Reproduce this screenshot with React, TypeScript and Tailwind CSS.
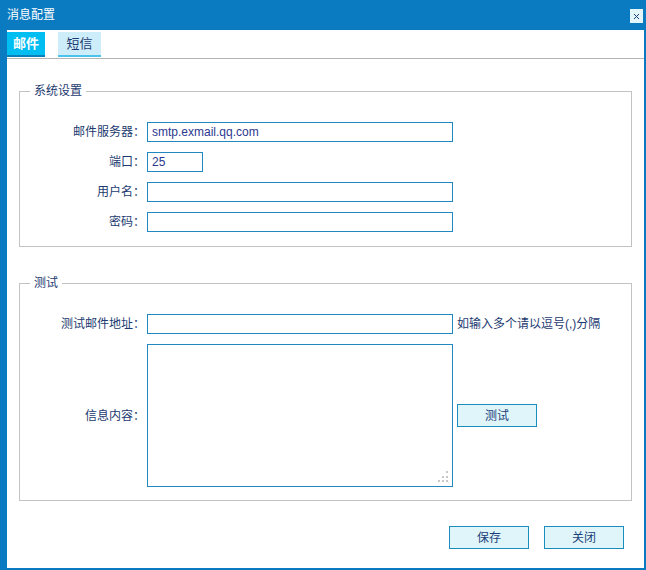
import React, { useState } from 'react';

const FONT = 'font-["Liberation_Sans","Noto_Sans_CJK_SC",sans-serif]';

const Field: React.FC<{ label: string; children: React.ReactNode; extra?: React.ReactNode }> = ({ label, children, extra }) => (
  <div className="flex items-center">
    <label className="w-[125px] text-right text-[12px] leading-[16px] text-[#1c3a70]">{label}</label>
    <div className="ml-[2px] flex">{children}</div>
    {extra && <div className="ml-[4px] flex">{extra}</div>}
  </div>
);

const inputCls =
  'block h-[20px] border border-[#2288c0] bg-white px-[4px] text-[12px] text-[#2b3990] outline-none';

const btnCls =
  'w-[80px] h-[23px] border border-[#1b8dbf] bg-[#e0f5fa] text-[12px] text-[#1b3f7a] flex items-center justify-center';

const App: React.FC = () => {
  const [tab, setTab] = useState<'mail' | 'sms'>('mail');
  const [server, setServer] = useState('smtp.exmail.qq.com');
  const [port, setPort] = useState('25');
  const [user, setUser] = useState('');
  const [pwd, setPwd] = useState('');
  const [testAddr, setTestAddr] = useState('');
  const [content, setContent] = useState('');

  return (
    <div className={`w-[646px] h-[570px] bg-[#0b7bc1] flex flex-col pl-[7px] pr-[2px] pb-[2px] ${FONT}`}>
      {/* title bar */}
      <div className="h-[30px] flex items-start justify-between">
        <span className="mt-[7px] text-[12px] leading-[16px] text-white">消息配置</span>
        <button className="mt-[9px] mr-[1px] w-[13px] h-[14px] bg-[#e3f6fb] flex items-center justify-center">
          <svg width="7" height="7" viewBox="0 0 7 7">
            <path d="M1 1 L6 6 M6 1 L1 6" stroke="#1b3f7a" strokeWidth="1" />
          </svg>
        </button>
      </div>

      <div className="flex-1 bg-white flex flex-col">
        {/* tabs */}
        <div className="h-[29px] border-b border-[#b4b4b4] flex items-start gap-[13px] pt-[2px]">
          <button
            onClick={() => setTab('mail')}
            className={`h-[25px] w-[38px] border-b-2 text-[13px] ${
              tab === 'mail'
                ? 'bg-[#00bdf2] border-[#0a80b8] text-white font-bold'
                : 'bg-[#ccedf9] border-[#4cc3ec] text-[#1c3a70]'
            }`}
          >
            邮件
          </button>
          <button
            onClick={() => setTab('sms')}
            className={`h-[25px] w-[43px] border-b-2 text-[13px] ${
              tab === 'sms'
                ? 'bg-[#00bdf2] border-[#0a80b8] text-white font-bold'
                : 'bg-[#ccedf9] border-[#4cc3ec] text-[#1c3a70]'
            }`}
          >
            短信
          </button>
        </div>

        {/* 系统设置 */}
        <fieldset className="mx-[12px] mt-[24px] border border-[#c3c3c3] pt-[23px] pb-[14px]">
          <legend className="ml-[10px] px-[4px] text-[12px] leading-[16px] text-[#1c3a70]">系统设置</legend>
          <div className="flex flex-col gap-[10px]">
            <Field label="邮件服务器：">
              <input className={`${inputCls} w-[306px]`} value={server} onChange={(e) => setServer(e.target.value)} />
            </Field>
            <Field label="端口：">
              <input className={`${inputCls} w-[56px]`} value={port} onChange={(e) => setPort(e.target.value)} />
            </Field>
            <Field label="用户名：">
              <input className={`${inputCls} w-[306px]`} value={user} onChange={(e) => setUser(e.target.value)} />
            </Field>
            <Field label="密码：">
              <input type="password" className={`${inputCls} w-[306px]`} value={pwd} onChange={(e) => setPwd(e.target.value)} />
            </Field>
          </div>
        </fieldset>

        {/* 测试 */}
        <fieldset className="mx-[12px] mt-[28px] border border-[#c3c3c3] pt-[23px] pb-[13px]">
          <legend className="ml-[10px] px-[4px] text-[12px] leading-[16px] text-[#1c3a70]">测试</legend>
          <div className="flex flex-col gap-[10px]">
            <Field
              label="测试邮件地址："
              extra={<span className="text-[12px] leading-[16px] text-[#1c3a70]">如输入多个请以逗号(,)分隔</span>}
            >
              <input className={`${inputCls} w-[306px]`} value={testAddr} onChange={(e) => setTestAddr(e.target.value)} />
            </Field>
            <Field label="信息内容：" extra={<button className={btnCls}>测试</button>}>
              <div className="relative w-[306px] h-[143px]">
                <textarea
                  className="block w-full h-full border border-[#2288c0] resize-none outline-none p-[4px] text-[12px] text-[#2b3990]"
                  value={content}
                  onChange={(e) => setContent(e.target.value)}
                />
                <svg className="absolute right-[4px] bottom-[4px]" width="12" height="12" viewBox="0 0 12 12">
                  <rect x="9" y="0" width="2" height="2" fill="#c8c8c8" />
                  <rect x="5" y="5" width="2" height="2" fill="#c8c8c8" />
                  <rect x="9" y="5" width="2" height="2" fill="#c8c8c8" />
                  <rect x="1" y="9" width="2" height="2" fill="#c8c8c8" />
                  <rect x="5" y="9" width="2" height="2" fill="#c8c8c8" />
                  <rect x="9" y="9" width="2" height="2" fill="#c8c8c8" />
                </svg>
              </div>
            </Field>
          </div>
        </fieldset>

        {/* footer */}
        <div className="mt-[25px] flex justify-end gap-[15px] pr-[20px]">
          <button className={btnCls}>保存</button>
          <button className={btnCls}>关闭</button>
        </div>
      </div>
    </div>
  );
};

export default App;
